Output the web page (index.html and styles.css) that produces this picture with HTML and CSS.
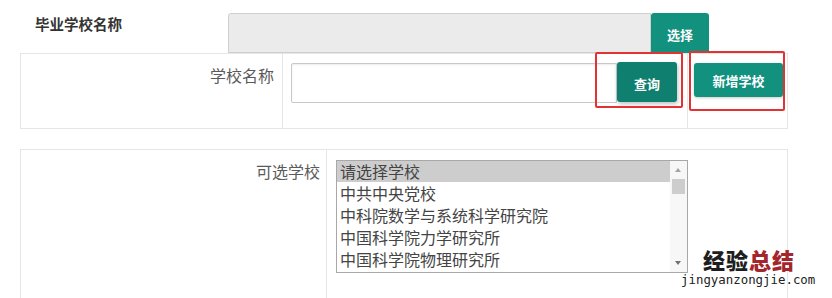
FILE: index.html
```html
<!DOCTYPE html>
<html lang="zh-CN">
<head>
<meta charset="UTF-8" />
<title>毕业学校名称</title>
<link rel="stylesheet" href="styles.css">
</head>
<body>

<div class="page">
  <div class="grad-row">
    <div class="grad-label">毕业学校名称</div>
    <div class="grad-field"></div>
    <button class="btn btn-pick">选择</button>
  </div>

  <table class="form-table search-table">
    <tr>
      <td class="cell-label">学校名称</td>
      <td class="cell-input">
        <div class="input-group">
          <input type="text" class="school-input" />
          <button class="btn btn-query">查询</button>
        </div>
        <span class="mark mark-query"></span>
      </td>
      <td class="cell-add">
        <button class="btn btn-add">新增学校</button>
        <span class="mark mark-add"></span>
      </td>
    </tr>
  </table>

  <table class="form-table pick-table">
    <tr>
      <td class="cell-label">可选学校</td>
      <td class="cell-list">
        <div class="listbox">
          <ul class="options">
            <li class="selected">请选择学校</li>
            <li>中共中央党校</li>
            <li>中科院数学与系统科学研究院</li>
            <li>中国科学院力学研究所</li>
            <li>中国科学院物理研究所</li>
          </ul>
          <div class="scrollbar">
            <span class="arrow arrow-up"></span>
            <span class="thumb"></span>
            <span class="arrow arrow-down"></span>
          </div>
        </div>
      </td>
    </tr>
  </table>
</div>

<div class="watermark">
  <div class="wm-title">经验<span class="wm-red">总结</span></div>
  <div class="wm-url">jingyanzongjie.com</div>
</div>

</body>
</html>
```

FILE: styles.css
```css
body {
  margin: 0;
  background: #fff;
  font-family: "Noto Sans CJK SC", "Noto Sans", sans-serif;
  color: #555;
}
.page {
  padding: 13px 0 0 20px;
  width: 768px;
}
.grad-row {
  display: flex;
  height: 40px;
}
.grad-label {
  width: 193px;
  padding-left: 15px;
  font-size: 14.5px;
  font-weight: 700;
  color: #333;
  line-height: 20px;
  padding-top: 1px;
}
.grad-field {
  width: 421px;
  height: 38px;
  background: #ebebeb;
  border: 1px solid #cfcfcf;
  border-radius: 3px 0 0 0;
}
.btn {
  border: none;
  color: #fff;
  font-family: "Noto Sans CJK SC", sans-serif;
  font-weight: 700;
  font-size: 13px;
  padding: 0;
  cursor: pointer;
}
.btn-pick {
  width: 58px;
  height: 40px;
  background: #13917f;
  border-radius: 3px 3px 0 0;
  padding-top: 2px;
}

/* tables */
.form-table {
  width: 768px;
  border-collapse: collapse;
  table-layout: fixed;
}
.form-table td {
  border: 1px solid #e6e6e6;
  vertical-align: top;
  padding: 0;
}
.cell-label {
  text-align: right;
  font-size: 16px;
  line-height: 20px;
  color: #5a5a5a;
}
.search-table tr { height: 75px; }
.search-table .cell-label {
  width: 253px;
  padding: 11px 8px 0 0 !important;
}
.cell-input {
  width: 396px;
  padding: 9px 0 0 8px !important;
  position: relative;
}
.input-group {
  display: flex;
  align-items: flex-start;
}
.school-input {
  box-sizing: border-box;
  width: 326px;
  height: 40px;
  margin: 0;
  border: 1px solid #c9c9c9;
  border-radius: 2px 0 0 2px;
  box-shadow: inset 0 1px 2px rgba(0,0,0,0.08);
  outline: none;
}
.btn-query {
  width: 60px;
  height: 40px;
  margin-top: -1px;
  background: #0f7f70;
  border-radius: 3px;
  box-shadow: 1px 2px 4px rgba(0,0,0,0.25);
  padding-top: 3px;
}
.cell-add {
  padding: 9px 0 0 6px !important;
  position: relative;
}
.btn-add {
  width: 89px;
  height: 34px;
  background: #13917f;
  border-radius: 3px;
  box-shadow: 0 1px 3px rgba(0,0,0,0.2);
}

/* red annotation frames */
.mark {
  position: absolute;
  border: 2px solid #e23232;
  border-radius: 2px;
}
.mark-query {
  left: 312px;
  top: -2px;
  width: 84px;
  height: 52px;
}
.mark-add {
  left: 1px;
  top: -3px;
  width: 92px;
  height: 56px;
}

.pick-table {
  margin-top: 20px;
}
.pick-table tr { height: 160px; }
.pick-table .cell-label {
  width: 299px;
  padding: 11px 6px 0 0 !important;
}
.cell-list {
  padding: 10px 0 0 9px !important;
}
.listbox {
  display: flex;
  width: 350px;
  height: 111px;
  border: 1px solid #a8a8a8;
  overflow: hidden;
}
.options {
  flex: 1;
  list-style: none;
  margin: 0;
  padding: 0;
  font-size: 16px;
  line-height: 22px;
  color: #444;
}
.options li {
  padding-left: 3px;
  white-space: nowrap;
}
.options li.selected {
  background: #cdcdcd;
  line-height: 21px;
}
.scrollbar {
  width: 17px;
  background: #f7f7f7;
  position: relative;
}
.thumb {
  position: absolute;
  left: 2px;
  top: 18px;
  width: 13px;
  height: 15px;
  background: #cdcdcd;
}
.arrow {
  position: absolute;
  left: 5px;
  width: 0;
  height: 0;
  border-left: 3.5px solid transparent;
  border-right: 3.5px solid transparent;
}
.arrow-up {
  top: 7px;
  border-bottom: 4px solid #a3a3a3;
}
.arrow-down {
  bottom: 7px;
  border-top: 4px solid #707070;
}

/* watermark */
.watermark {
  position: absolute;
  left: 681px;
  top: 246px;
  width: 136px;
}
.wm-title {
  font-family: "Noto Sans CJK SC", sans-serif;
  font-weight: 900;
  font-size: 22px;
  line-height: 26px;
  color: #1e1e1e;
  letter-spacing: 1px;
  padding-left: 22px;
}
.wm-red { color: #a3262c; }
.wm-url {
  font-family: "DejaVu Sans Mono", monospace;
  font-size: 12.4px;
  line-height: 15px;
  color: #222;
}
```
